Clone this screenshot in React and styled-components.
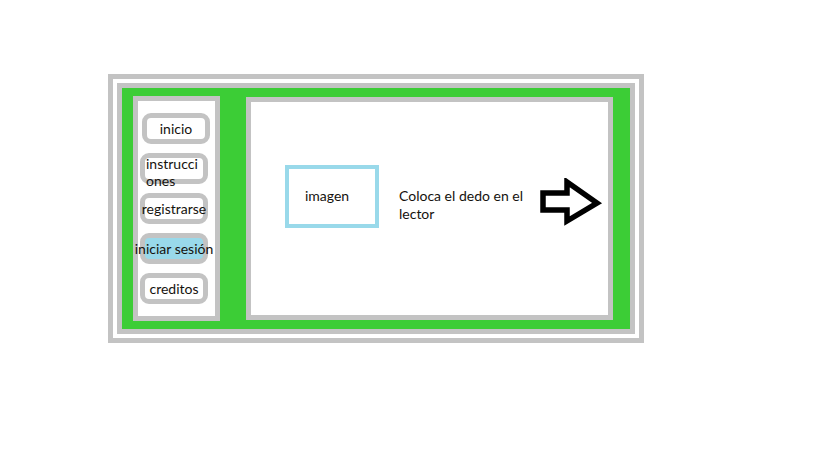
import React from "react";
import styled, { createGlobalStyle } from "styled-components";

const GlobalStyle = createGlobalStyle`
  body {
    margin: 0;
    background: #ffffff;
    font-family: Lato, "Open Sans", sans-serif;
  }
`;

const menu = [
  { label: "inicio", offset: 2 },
  { label: ["instrucci", "ones"], offset: 0, multiline: true },
  { label: "registrarse", offset: 0 },
  { label: "iniciar sesión", offset: 0, active: true },
  { label: "creditos", offset: 0 },
];

const App = () => {
  return (
    <>
      <GlobalStyle />
      <Frame>
        <Board>
          <Sidebar>
            {menu.map((item, i) => (
              <MenuButton
                key={i}
                $active={item.active}
                $offset={item.offset}
                $multiline={item.multiline}
              >
                {Array.isArray(item.label) ? (
                  <span>
                    {item.label[0]}
                    <br />
                    {item.label[1]}
                  </span>
                ) : (
                  item.label
                )}
              </MenuButton>
            ))}
          </Sidebar>
          <Main>
            <ImageBox>imagen</ImageBox>
            <Instruction>Coloca el dedo en el lector</Instruction>
            <Arrow width="64" height="48" viewBox="0 0 64 48">
              <polygon
                points="4,15 28,15 28,4 58,25 28,43 28,32 4,32"
                fill="#ffffff"
                stroke="#000000"
                strokeWidth="5.5"
                strokeLinejoin="miter"
              />
            </Arrow>
          </Main>
        </Board>
      </Frame>
    </>
  );
};

const Frame = styled.div`
  margin: 74px 0 0 108px;
  width: 536px;
  box-sizing: border-box;
  border: 5px solid #c3c3c3;
  padding: 4px;
  background: #ffffff;
`;

const Board = styled.div`
  border: 5px solid #c3c3c3;
  background: #3ccd36;
  display: flex;
  align-items: flex-start;
  gap: 26px;
  padding: 8px 16px 8px 11px;
`;

const Sidebar = styled.div`
  width: 87px;
  height: 225px;
  box-sizing: border-box;
  border: 5px solid #c3c3c3;
  background: #ffffff;
  display: flex;
  flex-direction: column;
  gap: 9px;
  padding: 12px 0 0 2px;
`;

const MenuButton = styled.div`
  flex-shrink: 0;
  width: 68px;
  height: 31px;
  box-sizing: border-box;
  margin-left: ${(p) => p.$offset}px;
  border: 5px solid #c3c3c3;
  border-radius: 9px;
  background: ${(p) => (p.$active ? "#99d9ea" : "#ffffff")};
  display: flex;
  align-items: ${(p) => (p.$multiline ? "flex-start" : "center")};
  justify-content: ${(p) => (p.$multiline ? "flex-start" : "center")};
  white-space: nowrap;
  font-size: 14px;
  line-height: ${(p) => (p.$multiline ? "17px" : "18px")};
  color: #15120e;

  span {
    margin-top: -3px;
    padding-left: 1px;
  }
`;

const Main = styled.div`
  margin-top: 1px;
  width: 367px;
  height: 223px;
  box-sizing: border-box;
  border: 5px solid #c3c3c3;
  background: #ffffff;
  display: flex;
  align-items: flex-start;
  padding: 63px 0 0 34px;
`;

const ImageBox = styled.div`
  width: 94px;
  height: 63px;
  box-sizing: border-box;
  border: 4px solid #99d9ea;
  display: flex;
  align-items: center;
  justify-content: center;
  padding-right: 10px;
  padding-bottom: 3px;
  font-size: 14px;
  color: #15120e;
`;

const Instruction = styled.p`
  margin: 22px 0 0 20px;
  width: 132px;
  font-size: 14px;
  line-height: 18px;
  color: #15120e;
`;

const Arrow = styled.svg`
  margin: 13px 0 0 8px;
  flex-shrink: 0;
`;

export default App;
